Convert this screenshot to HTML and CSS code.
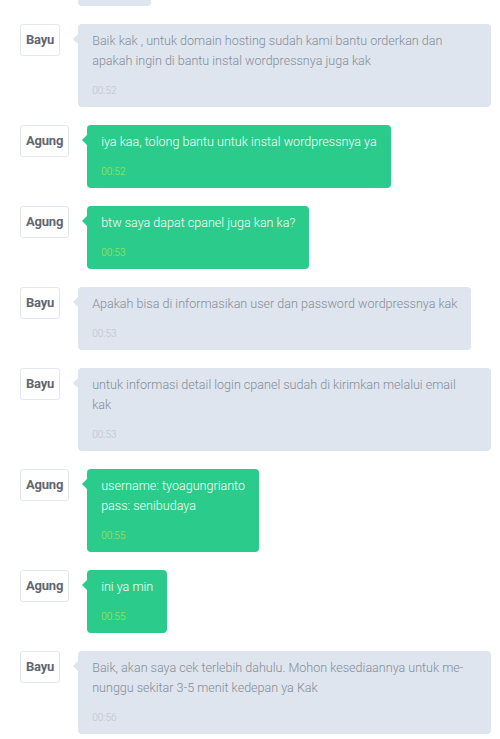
FILE: index.html
```html
<!DOCTYPE html>
<html>
<head>
<meta charset="utf-8">
<link rel="stylesheet" href="styles.css">
</head>
<body>
<div class="chat">
  <div class="bubble-end"></div>
  <div class="row">
    <div class="avatar">Bayu</div>
    <div class="bubble bayu"><p class="text">Baik kak , untuk domain hosting sudah kami bantu orderkan dan apakah ingin di bantu instal wordpressnya juga kak</p><div class="time">00:52</div></div>
  </div>
  <div class="row">
    <div class="avatar">Agung</div>
    <div class="bubble agung"><p class="text">iya kaa, tolong bantu untuk instal wordpressnya ya</p><div class="time">00:52</div></div>
  </div>
  <div class="row">
    <div class="avatar">Agung</div>
    <div class="bubble agung"><p class="text">btw saya dapat cpanel juga kan ka?</p><div class="time">00:53</div></div>
  </div>
  <div class="row">
    <div class="avatar">Bayu</div>
    <div class="bubble bayu"><p class="text">Apakah bisa di informasikan user dan password wordpressnya kak</p><div class="time">00:53</div></div>
  </div>
  <div class="row">
    <div class="avatar">Bayu</div>
    <div class="bubble bayu"><p class="text">untuk informasi detail login cpanel sudah di kirimkan melalui email kak</p><div class="time">00:53</div></div>
  </div>
  <div class="row">
    <div class="avatar">Agung</div>
    <div class="bubble agung"><p class="text">username: tyoagungrianto<br>pass: senibudaya</p><div class="time">00:55</div></div>
  </div>
  <div class="row">
    <div class="avatar">Agung</div>
    <div class="bubble agung"><p class="text">ini ya min</p><div class="time">00:55</div></div>
  </div>
  <div class="row">
    <div class="avatar">Bayu</div>
    <div class="bubble bayu"><p class="text">Baik, akan saya cek terlebih dahulu. Mohon kesediaannya untuk me-nunggu sekitar 3-5 menit kedepan ya Kak</p><div class="time">00:56</div></div>
  </div>
</div>
</body>
</html>
```
FILE: styles.css
```css
html, body {
  margin: 0;
  padding: 0;
  background: #ffffff;
  font-family: Roboto, "Liberation Sans", sans-serif;
}
.chat {
  display: flex;
  flex-direction: column;
  gap: 18px;
  padding: 0 9px 0 20px;
}
.bubble-end {
  margin-left: 58px;
  width: 73px;
  height: 6px;
  background: #dee5ee;
  border-radius: 0 0 4px 4px;
}
.row {
  display: flex;
  align-items: flex-start;
}
.avatar {
  flex: 0 0 auto;
  height: 30px;
  line-height: 30px;
  padding: 0 5px;
  border: 1px solid #e3e8ef;
  border-radius: 3px;
  background: #fff;
  font-size: 13px;
  font-weight: 700;
  color: #5f6671;
  letter-spacing: -0.2px;
}
.bubble {
  position: relative;
  margin-left: 18px;
  padding: 7px 14px 9px;
  border-radius: 4px;
  flex: 0 1 auto;
  min-width: 0;
}
.bubble::before {
  content: "";
  position: absolute;
  left: -5px;
  top: 10px;
  border-style: solid;
  border-width: 5px 5px 5px 0;
}
.bayu {
  background: #dee5ee;
}
.bayu::before {
  border-color: transparent #dee5ee transparent transparent;
}
.agung {
  background: #2bcc8b;
}
.agung::before {
  border-color: transparent #2bcc8b transparent transparent;
}
.text {
  margin: 0;
  font-size: 12.55px;
  font-weight: 300;
  line-height: 20px;
}
.bayu .text {
  color: #858c98;
}
.agung .text {
  color: #f4fffa;
}
.time {
  margin-top: 13px;
  font-size: 10px;
  font-weight: 300;
  line-height: 14px;
}
.bayu .time {
  color: #bcc3cd;
}
.agung .time {
  color: #a6e64f;
}
```
